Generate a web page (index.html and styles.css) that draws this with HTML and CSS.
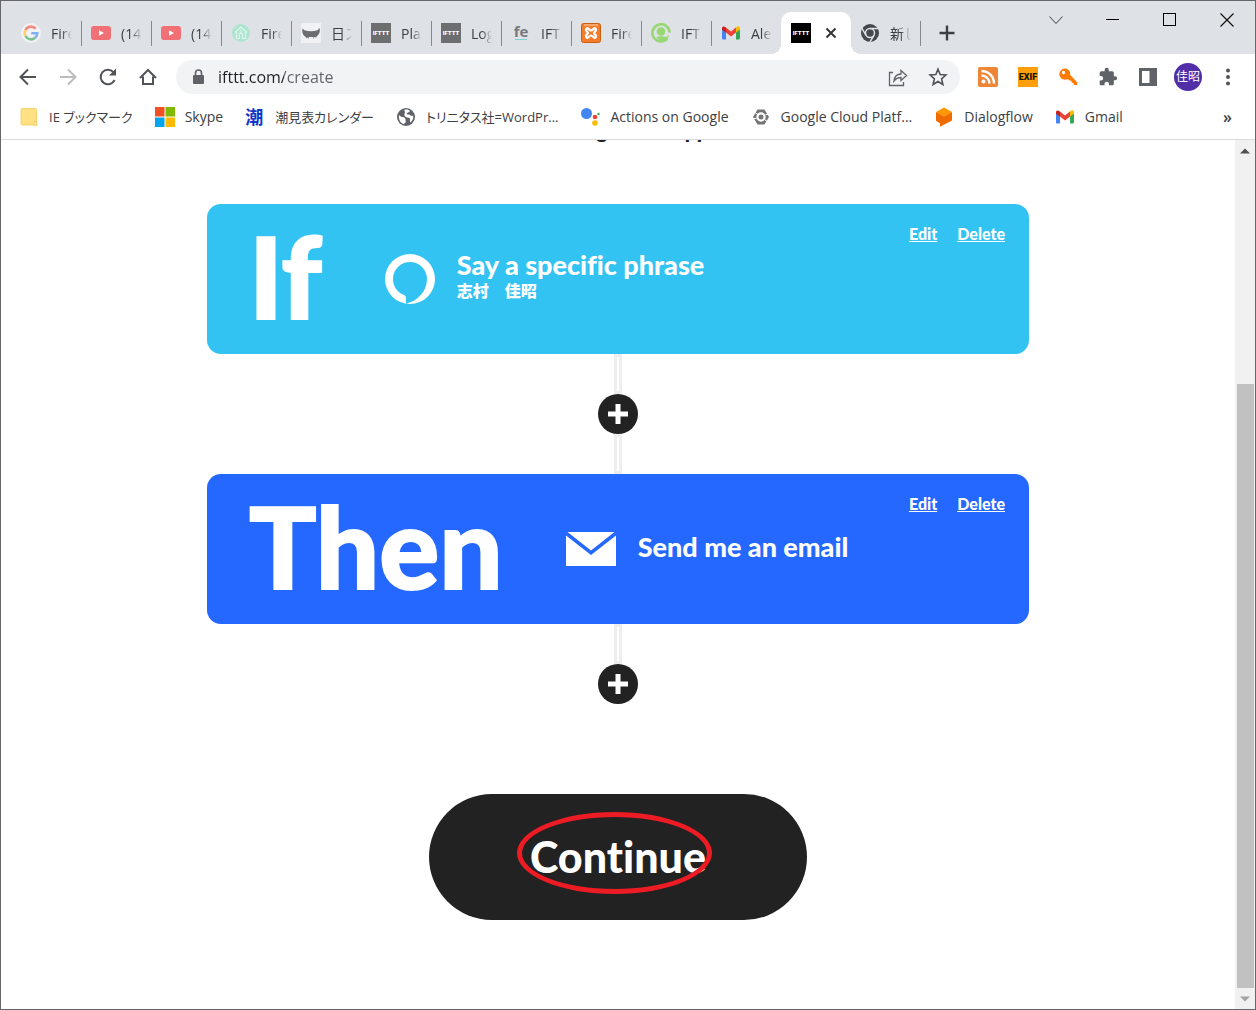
FILE: index.html
```
<!DOCTYPE html>
<html lang="ja">
<head>
	<meta charset="utf-8">
	<meta name="viewport" content="width=device-width, initial-scale=1.0">
	<title>IFTTT</title>
	<link rel="stylesheet" href="styles.css">
</head>
<body>

<!-- shared icons -->
<svg class="sprite" aria-hidden="true">
	<symbol id="youtube" viewBox="0 0 20 20">
		<rect x="0" y="3" width="20" height="14" rx="3" fill="#f07075"/>
		<path d="M8 7.2v5.6l5-2.8z" fill="#fff"/>
	</symbol>
	<symbol id="gmail" viewBox="0 0 20 20">
		<path d="M1 5.500v9.700c0 .9.600 1.300 1.300 1.300H5V9.300z" fill="#4285f4"/>
		<path d="M19 5.500v9.700c0 .9-.6 1.300-1.300 1.300H15V9.300z" fill="#34a853"/>
		<path d="M15 4.600v5l4-3V5.300c0-1.900-2-2.600-3.300-1.500z" fill="#fbbc04"/>
		<path d="M5 9.600v-5l5 3.900 5-3.900v5l-5 3.900z" fill="#ea4335"/>
		<path d="M1 5.300v1.400l4 3v-5l-.7-.7C3 2.900 1 3.500 1 5.300z" fill="#c5221f"/>
	</symbol>
</svg>

<div class="window">

	<header class="strip">
		<nav class="tabs" aria-label="Tabs">
			<a class="tab" href="#">
				<svg class="icon" viewBox="0 0 20 20">
					<circle cx="10" cy="10" r="10" fill="#f1f2f4"/>
					<g fill="none" stroke-width="2.600">
						<path d="M14.800 5.700A6.300 6.300 0 0 0 4.500 7" stroke="#f08a83"/>
						<path d="M4.500 7a6.300 6.300 0 0 0 0 6" stroke="#fbd26b"/>
						<path d="M4.500 13a6.300 6.300 0 0 0 9.700 1.800" stroke="#7cc48d"/>
						<path d="M14.200 14.800a6.300 6.300 0 0 0 2.100-4.500H10.300" stroke="#83aef5"/>
					</g>
				</svg>
				<span class="tab-title">Fire</span>
			</a>
			<a class="tab" href="#">
				<svg class="icon"><use href="#youtube"/></svg>
				<span class="tab-title">(14</span>
			</a>
			<a class="tab" href="#">
				<svg class="icon"><use href="#youtube"/></svg>
				<span class="tab-title">(14</span>
			</a>
			<a class="tab" href="#">
				<svg class="icon" viewBox="0 0 20 20">
					<circle cx="10" cy="10" r="9" fill="#aee5cf"/>
					<path d="M4 9.500L10 4l6 5.500M5.500 9v6.500h3V11L10 9.500l1.500 1.500v4.500h3V9M10 6.500v2" fill="none" stroke="#dff6ee" stroke-width="1.200"/>
				</svg>
				<span class="tab-title">Fire</span>
			</a>
			<a class="tab" href="#">
				<svg class="icon" viewBox="0 0 20 20">
					<rect width="20" height="20" fill="#f1f2f4"/>
					<path d="M1.500 5.500l2 1.800c4 1.200 9 1.200 13 0l2-2.200c1 3.500-.3 6.800-3 8.300l-.4 1.800-.8-1.500-1 .3-.4 1.700-.9-1.600H8l-.6 1.800-.9-1.700-1 1.500-.5-1.800C2 12.800.7 9.500 1.500 5.500z" fill="#6c6d70"/>
				</svg>
				<span class="tab-title">日ス</span>
			</a>
			<a class="tab" href="#">
				<svg class="icon" viewBox="0 0 20 20"><rect width="20" height="20" fill="#6d6e70"/><text class="ifttt-mark" x="10" y="12">IFTTT</text></svg>
				<span class="tab-title">Pla</span>
			</a>
			<a class="tab" href="#">
				<svg class="icon" viewBox="0 0 20 20"><rect width="20" height="20" fill="#6d6e70"/><text class="ifttt-mark" x="10" y="12">IFTTT</text></svg>
				<span class="tab-title">Log</span>
			</a>
			<a class="tab" href="#">
				<svg class="icon" viewBox="0 0 20 20"><text class="fe-mark" x="10" y="14">fe</text><rect x="4" y="16" width="12" height="1" fill="#7fd0cd"/></svg>
				<span class="tab-title">IFT</span>
			</a>
			<a class="tab" href="#">
				<svg class="icon" viewBox="0 0 20 20">
					<rect x=".5" y=".5" width="19" height="19" rx="2" fill="#f47b2a" stroke="#c9600f"/>
					<path d="M3 2h14" stroke="#ffd2ae"/>
					<path d="M5.500 5.500C3.500 8 7 8.500 7 10s-3.500 2-1.500 4.500c1.500 1.500 2.500-2 4.500-2s3 3.500 4.500 2C16.500 12 13 11.500 13 10s3.500-2 1.500-4.500c-1.500-1.500-2.500 2-4.500 2s-3-3.500-4.500-2z" fill="none" stroke="#fff" stroke-width="2.200"/>
				</svg>
				<span class="tab-title">Fire</span>
			</a>
			<a class="tab" href="#">
				<svg class="icon" viewBox="0 0 20 20">
					<path d="M16.500 15.500A8.600 8.600 0 1 1 18.600 9.500" fill="none" stroke="#98d873" stroke-width="2.600"/>
					<circle cx="10" cy="8.500" r="4.300" fill="#98d873"/>
					<path d="M5 14.500c3-1.500 7-1.500 10-.5l3.500-2-2.500 5-5 2z" fill="#98d873"/>
				</svg>
				<span class="tab-title">IFT</span>
			</a>
			<a class="tab" href="#">
				<svg class="icon"><use href="#gmail"/></svg>
				<span class="tab-title">Ale</span>
			</a>
			<div class="tab active">
				<svg class="icon" viewBox="0 0 20 20"><rect width="20" height="20" fill="#000"/><text class="ifttt-mark" x="10" y="12">IFTTT</text></svg>
				<button class="close-tab" aria-label="Close tab">
					<svg viewBox="0 0 20 20"><path d="M5.500 5.500l9 9M14.500 5.500l-9 9" stroke="#35363a" stroke-width="2"/></svg>
				</button>
			</div>
			<a class="tab" href="#">
				<svg class="icon" viewBox="0 0 20 20">
					<circle cx="10" cy="10" r="9" fill="#45484d"/>
					<circle cx="10" cy="10" r="4.500" fill="none" stroke="#dee1e6" stroke-width="1.500"/>
					<path d="M10 5.500h8.500M6 12.300L1.800 5M14 12.300l-4.300 7" stroke="#dee1e6" stroke-width="1.500"/>
				</svg>
				<span class="tab-title">新し</span>
			</a>
		</nav>
		<button class="new-tab" aria-label="New tab">
			<svg viewBox="0 0 20 20"><path d="M10 2.500v15M2.500 10h15" stroke="#3c4043" stroke-width="2.400"/></svg>
		</button>
		<div class="controls">
			<button aria-label="Search tabs"><svg viewBox="0 0 20 20"><path d="M3.500 6.500l6.500 7 6.500-7" fill="none" stroke="#3c4043"/></svg></button>
			<button aria-label="Minimize"><svg viewBox="0 0 20 20"><path d="M3 9.500h13" stroke="#000"/></svg></button>
			<button aria-label="Maximize"><svg viewBox="0 0 20 20"><rect x="3.500" y="3.500" width="12" height="12" fill="none" stroke="#000"/></svg></button>
			<button aria-label="Close"><svg viewBox="0 0 20 20"><path d="M3.500 3.500l13 13M16.500 3.500l-13 13" stroke="#111" stroke-width="1.200"/></svg></button>
		</div>
	</header>

	<div class="toolbar">
		<div class="buttons">
			<button aria-label="Back"><svg viewBox="0 0 20 20"><path d="M18 10H3M10 2.500L2.500 10l7.500 7.500" fill="none" stroke="#505459" stroke-width="2"/></svg></button>
			<button aria-label="Forward"><svg viewBox="0 0 20 20"><path d="M2 10h15M10 2.500l7.500 7.500-7.500 7.500" fill="none" stroke="#babcbe" stroke-width="2"/></svg></button>
			<button aria-label="Reload"><svg viewBox="0 0 20 20"><path d="M16.600 13A7.300 7.300 0 1 1 15.300 5" fill="none" stroke="#505459" stroke-width="2"/><path d="M18 1.500V8.500h-7z" fill="#505459"/></svg></button>
			<button aria-label="Home"><svg viewBox="0 0 20 20"><path d="M2 11l8-8 8 8M5 9.500V17h10V9.500" fill="none" stroke="#505459" stroke-width="2"/></svg></button>
		</div>
		<form class="omnibox">
			<svg class="icon" viewBox="0 0 20 20"><rect x="5" y="8" width="11" height="9" rx="1" fill="#5f6368"/><path d="M7.500 8.500V6a3 3 0 0 1 6 0v2.500" fill="none" stroke="#5f6368" stroke-width="1.600"/></svg>
			<input class="address" type="text" value="ifttt.com/create" aria-label="Address">
			<button type="button" aria-label="Share"><svg viewBox="0 0 20 20"><path d="M5 5.500H1.500v13h14V15M6 14c.5-4.500 3-7 7-7V3.500l5.500 5-5.500 5V10.500c-3 0-5 1-7 3.500z" fill="none" stroke="#5f6368" stroke-width="1.300"/></svg></button>
			<button type="button" aria-label="Bookmark this tab"><svg viewBox="0 0 20 20"><path d="M10 2.200l2.200 5.300 5.700.5-4.300 3.800 1.300 5.700L10 14.500l-4.900 3 1.300-5.700L2.100 8l5.700-.5z" fill="none" stroke="#505459" stroke-width="1.600"/></svg></button>
		</form>
		<div class="buttons">
			<button aria-label="RSS"><svg viewBox="0 0 20 20"><rect width="20" height="20" rx="2" fill="#ef8536"/><circle cx="5.500" cy="14.500" r="2" fill="#fff"/><path d="M3.500 8.500a8 8 0 0 1 8 8M3.500 4a12.500 12.500 0 0 1 12.500 12.500" fill="none" stroke="#fff" stroke-width="2.400"/></svg></button>
			<button aria-label="EXIF"><svg viewBox="0 0 20 20"><rect width="20" height="20" fill="#ff9f0a"/><text class="exif-mark" x="10" y="13">EXIF</text></svg></button>
			<button aria-label="Key"><svg viewBox="0 0 20 20"><path d="M7 1.500a5.600 5.600 0 1 0 2.800 10.400l1.700 1.600 1.800.2.400 2 1.900.2.300 2.100h3.300v-2.800l-7-7.200A5.600 5.600 0 0 0 7 1.500zM5.500 3.800a1.700 1.700 0 1 1 0 3.400 1.700 1.700 0 0 1 0-3.400z" fill="#ff7a00" fill-rule="evenodd"/></svg></button>
			<button aria-label="Extensions"><svg viewBox="0 0 24 24"><path d="M20.500 11H19V7c0-1.100-.9-2-2-2h-4V3.500a2.500 2.500 0 0 0-5 0V5H4c-1.100 0-2 .9-2 2v3.800h1.500a2.700 2.700 0 0 1 0 5.400H2V20c0 1.100.9 2 2 2h3.800v-1.500a2.700 2.700 0 0 1 5.400 0V22H17c1.100 0 2-.9 2-2v-4h1.500a2.500 2.500 0 0 0 0-5z" fill="#5f6368"/></svg></button>
			<button aria-label="Side panel"><svg viewBox="0 0 20 20"><path d="M1 1h18v18H1zM4 4v12h7.500V4z" fill="#5f6368" fill-rule="evenodd"/></svg></button>
			<button aria-label="Profile"><span class="avatar">佳昭</span></button>
			<button aria-label="Menu"><svg viewBox="0 0 20 20"><g fill="#505459"><circle cx="10" cy="3.500" r="2"/><circle cx="10" cy="10" r="2"/><circle cx="10" cy="16.500" r="2"/></g></svg></button>
		</div>
	</div>

	<nav class="bookmarks" aria-label="Bookmarks">
		<a class="ja" href="#"><svg class="icon" viewBox="0 0 20 20"><path d="M3 1.500h13.500a1 1 0 0 1 1 1V14l.5 4H3a1 1 0 0 1-1-1V2.500a1 1 0 0 1 1-1z" fill="#ffe082" stroke="#f0cd5c" stroke-width=".8"/><path d="M15 18.400V14.500h2.800v3.900z" fill="#ffe9a6" stroke="#f0cd5c" stroke-width=".8"/></svg>IE ブックマーク</a>
		<a href="#"><svg class="icon" viewBox="0 0 20 20"><path d="M0 0h9.500v9.500H0z" fill="#f25022"/><path d="M10.500 0H20v9.500h-9.500z" fill="#7fba00"/><path d="M0 10.500h9.500V20H0z" fill="#00a4ef"/><path d="M10.500 10.500H20V20h-9.500z" fill="#ffb900"/></svg>Skype</a>
		<a class="ja" href="#"><span class="icon kanji">潮</span>潮見表カレンダー</a>
		<a class="ja" href="#"><svg class="icon" viewBox="0 0 20 20"><circle cx="10" cy="10" r="9" fill="#5f6368"/><path d="M3 8c2 2.500 4 1.500 6 3 1 1 0 2.500 1 3.500-1 1.500-1 2-2.500 2.500C4 16 2.500 12 3 8zM8 3c3-1 5 0 6 1-1 2-3 1-3.500 3 1.500 1 3-.5 4 1.500 1 1 2-.5 2.800.5.200 3-1 5-2.800 6.500-1.500-1.500.5-3-1-4.500-2-.5-4-.5-5-2.500C8 6.500 10 5.500 8 3z" fill="#fff"/></svg>トリニタス社=WordPr...</a>
		<a href="#"><svg class="icon" viewBox="0 0 20 20"><circle cx="6.500" cy="6.500" r="5.500" fill="#4285f4"/><circle cx="15" cy="10" r="2.300" fill="#ea4335"/><circle cx="15" cy="16" r="2.800" fill="#fbbc04"/><circle cx="18.500" cy="7" r="1.200" fill="#34a853"/></svg>Actions on Google</a>
		<a href="#"><svg class="icon" viewBox="0 0 20 20"><path d="M6.500 2.500h7L18 10l-4.500 7.500h-7L2 10z" fill="#757575"/><circle cx="10" cy="10" r="3.600" fill="none" stroke="#fff" stroke-width="2.200"/><path d="M3 5l4 2.500M13.500 12.500L17 15M1.500 11.500h4M14.500 7.500H18" stroke="#fff" stroke-width="1"/></svg>Google Cloud Platf...</a>
		<a href="#"><svg class="icon" viewBox="0 0 20 20"><path d="M10 .500L18 5l-8 4.500L2 5z" fill="#ff9800"/><path d="M2 5l8 4.500L18 5v8.500l-12 6.200v-3.500l-4-2.500z" fill="#ef6c00"/></svg>Dialogflow</a>
		<a href="#"><svg class="icon"><use href="#gmail"/></svg>Gmail</a>
		<button class="more" aria-label="More bookmarks">»</button>
	</nav>

	<div class="view">
		<main class="page">
			<h1>You’re using 1 of 5 Applets</h1>

			<section class="card if">
				<h2>If</h2>
				<svg class="service" viewBox="0 0 50 50"><path d="M25 0a25 25 0 1 1 0 50 25 25 0 0 1 0-50zM21 49.700c12-2.700 21-12.700 21-24.700a17 17 0 1 0-34 0c0 7 4 12.700 9.500 15.300 2.300.8 3.500 1.700 3.500 4.200z" fill="#fff" fill-rule="evenodd"/></svg>
				<div class="info">
					<h3>Say a specific phrase</h3>
					<p>志村　佳昭</p>
				</div>
				<div class="actions"><a href="#">Edit</a><a href="#">Delete</a></div>
			</section>

			<div class="line"></div>
			<button class="plus" aria-label="Add"><svg viewBox="0 0 20 20"><path d="M10 0v20M0 10h20" stroke="#fff" stroke-width="5"/></svg></button>
			<div class="line"></div>

			<section class="card then">
				<h2>Then</h2>
				<svg class="service" viewBox="0 0 50 50"><path d="M1.500 8h47L25 26.500zM0 11.500L25 31l25-19.500V42H0z" fill="#fff"/></svg>
				<div class="info">
					<h3>Send me an email</h3>
				</div>
				<div class="actions"><a href="#">Edit</a><a href="#">Delete</a></div>
			</section>

			<div class="line"></div>
			<button class="plus" aria-label="Add"><svg viewBox="0 0 20 20"><path d="M10 0v20M0 10h20" stroke="#fff" stroke-width="5"/></svg></button>

			<button class="continue">Continue<span class="mark"></span></button>
		</main>
		<div class="scrollbar">
			<svg viewBox="0 0 20 20"><path d="M5 13l5-5 5 5z" fill="#505050"/></svg>
			<div class="track"><div class="thumb"></div></div>
			<svg viewBox="0 0 20 20"><path d="M5 8l5 5 5-5z" fill="#a3a3a3"/></svg>
		</div>
	</div>

</div>

</body>
</html>
```
FILE: styles.css
```
* {
	box-sizing: border-box;
}
body {
	margin: 0;
	font-family: "Open Sans", "Noto Sans CJK JP", sans-serif;
	font-size: 14px;
	color: #3c4043;
}
h1, h2, h3, p {
	margin: 0;
}
a {
	color: inherit;
	text-decoration: none;
}
button {
	display: flex;
	align-items: center;
	justify-content: center;
	padding: 0;
	border: 0;
	background: none;
	color: inherit;
	font: inherit;
	cursor: pointer;
}
button svg {
	width: 20px;
	height: 20px;
}
.sprite {
	display: none;
}
.icon {
	flex: none;
	width: 20px;
	height: 20px;
}
.window {
	display: flex;
	flex-direction: column;
	height: 100vh;
	border: 1px solid #66676a;
	background: #fff;
	overflow: hidden;
}

/* tab strip */
.strip {
	display: flex;
	align-items: flex-end;
	height: 53px;
	padding-left: 11px;
	background: #dee1e6;
}
.tabs {
	display: flex;
}
.tab {
	position: relative;
	display: flex;
	align-items: center;
	gap: 10px;
	width: 70px;
	height: 42px;
	padding-left: 9px;
}
.tab::after {
	content: '';
	position: absolute;
	right: 0;
	top: 9px;
	width: 1px;
	height: 25px;
	background: #85888c;
}
.tab-title {
	width: 21px;
	overflow: hidden;
	white-space: nowrap;
	-webkit-mask-image: linear-gradient(90deg, #000 50%, transparent);
	mask-image: linear-gradient(90deg, #000 50%, transparent);
}
.active {
	margin-left: -1px;
	padding-left: 10px;
	border-radius: 10px 10px 0 0;
	background: #fff;
}
.active::before,
.active::after {
	content: '';
	position: absolute;
	top: auto;
	bottom: 0;
	width: 10px;
	height: 10px;
}
.active::before {
	left: -10px;
	background: radial-gradient(circle at 0 0, #dee1e6 10px, #fff 10px);
}
.active::after {
	right: -10px;
	background: radial-gradient(circle at 100% 0, #dee1e6 10px, #fff 10px);
}
.ifttt-mark {
	fill: #fff;
	font: 900 6px Roboto, sans-serif;
	text-anchor: middle;
}
.fe-mark {
	fill: #77797c;
	font: bold 15px "Open Sans", sans-serif;
	text-anchor: middle;
}
.exif-mark {
	fill: #1b1400;
	font: 900 9px Roboto, sans-serif;
	text-anchor: middle;
}
.new-tab {
	width: 52px;
	height: 42px;
}
.controls {
	display: flex;
	align-self: flex-start;
	margin-left: auto;
}
.controls button {
	width: 57px;
	height: 38px;
}

/* toolbar */
.toolbar {
	display: flex;
	align-items: center;
	gap: 8px;
	height: 46px;
	padding: 0 7px;
}
.buttons {
	display: flex;
}
.buttons button {
	width: 40px;
	height: 34px;
}
.omnibox {
	display: flex;
	flex: 1;
	align-items: center;
	height: 34px;
	padding: 0 2px 0 12px;
	border-radius: 17px;
	background: #f1f3f4;
}
.omnibox button {
	width: 40px;
	height: 34px;
}
.address {
	flex: 1;
	min-width: 0;
	margin-left: 10px;
	padding: 0;
	border: 0;
	outline: none;
	/* host name is darker than the path */
	background: linear-gradient(90deg, #202124 66px, #5f6368 66px);
	-webkit-background-clip: text;
	background-clip: text;
	-webkit-text-fill-color: transparent;
	font: 16px "Open Sans", sans-serif;
}
.avatar {
	width: 28px;
	height: 28px;
	border-radius: 50%;
	background: #512da8;
	color: #fff;
	font-size: 12px;
	line-height: 28px;
}

/* bookmarks */
.bookmarks {
	display: flex;
	align-items: center;
	gap: 22px;
	height: 40px;
	padding: 0 23px 6px 18px;
	border-bottom: 1px solid #d9dadc;
	font-feature-settings: "palt";
	white-space: nowrap;
}
.bookmarks a {
	display: flex;
	align-items: center;
	gap: 10px;
}
.bookmarks .ja {
	font-size: 13px;
}
.bookmarks .kanji {
	color: #1136cc;
	font-size: 18px;
	font-weight: bold;
	line-height: 20px;
}
.more {
	margin-left: auto;
	font-size: 16px;
	font-weight: 600;
}

/* page */
.view {
	display: flex;
	flex: 1;
	min-height: 0;
}
.page {
	display: flex;
	flex: 1;
	flex-direction: column;
	align-items: center;
	overflow: hidden;
	padding: 0 24px;
	color: #222;
	font-family: Lato, "Noto Sans CJK JP", sans-serif;
	font-weight: 900;
	font-variant-ligatures: none;
}
h1 {
	flex: none;
	margin: -21px 0 61px;
	font-size: 21px;
	line-height: 24px;
	font-weight: 900;
}
.card {
	display: flex;
	flex: none;
	align-items: center;
	width: 100%;
	max-width: 822px;
	height: 150px;
	padding: 0 24px 0 42px;
	border-radius: 14px;
	color: #fff;
}
.if {
	background: #33c3f3;
}
.then {
	background: #2468ff;
}
h2 {
	margin-right: 63px;
	padding-bottom: 6px;
	font-size: 112px;
	line-height: 144px;
	font-weight: 900;
	-webkit-text-stroke: 2px #fff;
}
.service {
	flex: none;
	width: 50px;
	height: 50px;
	margin-right: 22px;
}
.info {
	padding-bottom: 4px;
}
h3 {
	font-size: 27px;
	line-height: 28px;
	font-weight: 900;
}
.info p {
	font-size: 16px;
	line-height: 24px;
}
.actions {
	display: flex;
	align-self: flex-start;
	gap: 20px;
	margin-left: auto;
	padding-top: 20px;
	font-size: 16px;
	line-height: 20px;
}
.actions a {
	text-decoration: underline;
}
.line {
	flex: none;
	width: 8px;
	height: 40px;
	border: 3px solid #eee;
}
.plus {
	flex: none;
	width: 40px;
	height: 40px;
	border-radius: 50%;
	background: #222;
}
.continue {
	position: relative;
	flex: none;
	width: 378px;
	max-width: 100%;
	height: 126px;
	margin-top: 90px;
	padding-bottom: 2px;
	border-radius: 63px;
	background: #222;
	color: #fff;
	font-size: 43px;
	font-weight: 900;
	font-variant-ligatures: none;
}
/* red pen circle round the label */
.mark {
	position: absolute;
	left: 88px;
	top: 18px;
	width: 195px;
	height: 82px;
	border: 5px solid #ed1c24;
	border-radius: 50%;
}

/* scrollbar */
.scrollbar {
	display: flex;
	flex-direction: column;
	width: 20px;
	background: #f1f1f1;
}
.scrollbar svg {
	flex: none;
	height: 21px;
}
.track {
	display: flex;
	flex: 1;
	align-items: flex-end;
}
.thumb {
	width: 17px;
	height: 73%;
	margin-left: 2px;
	background: #c1c1c1;
}
```
